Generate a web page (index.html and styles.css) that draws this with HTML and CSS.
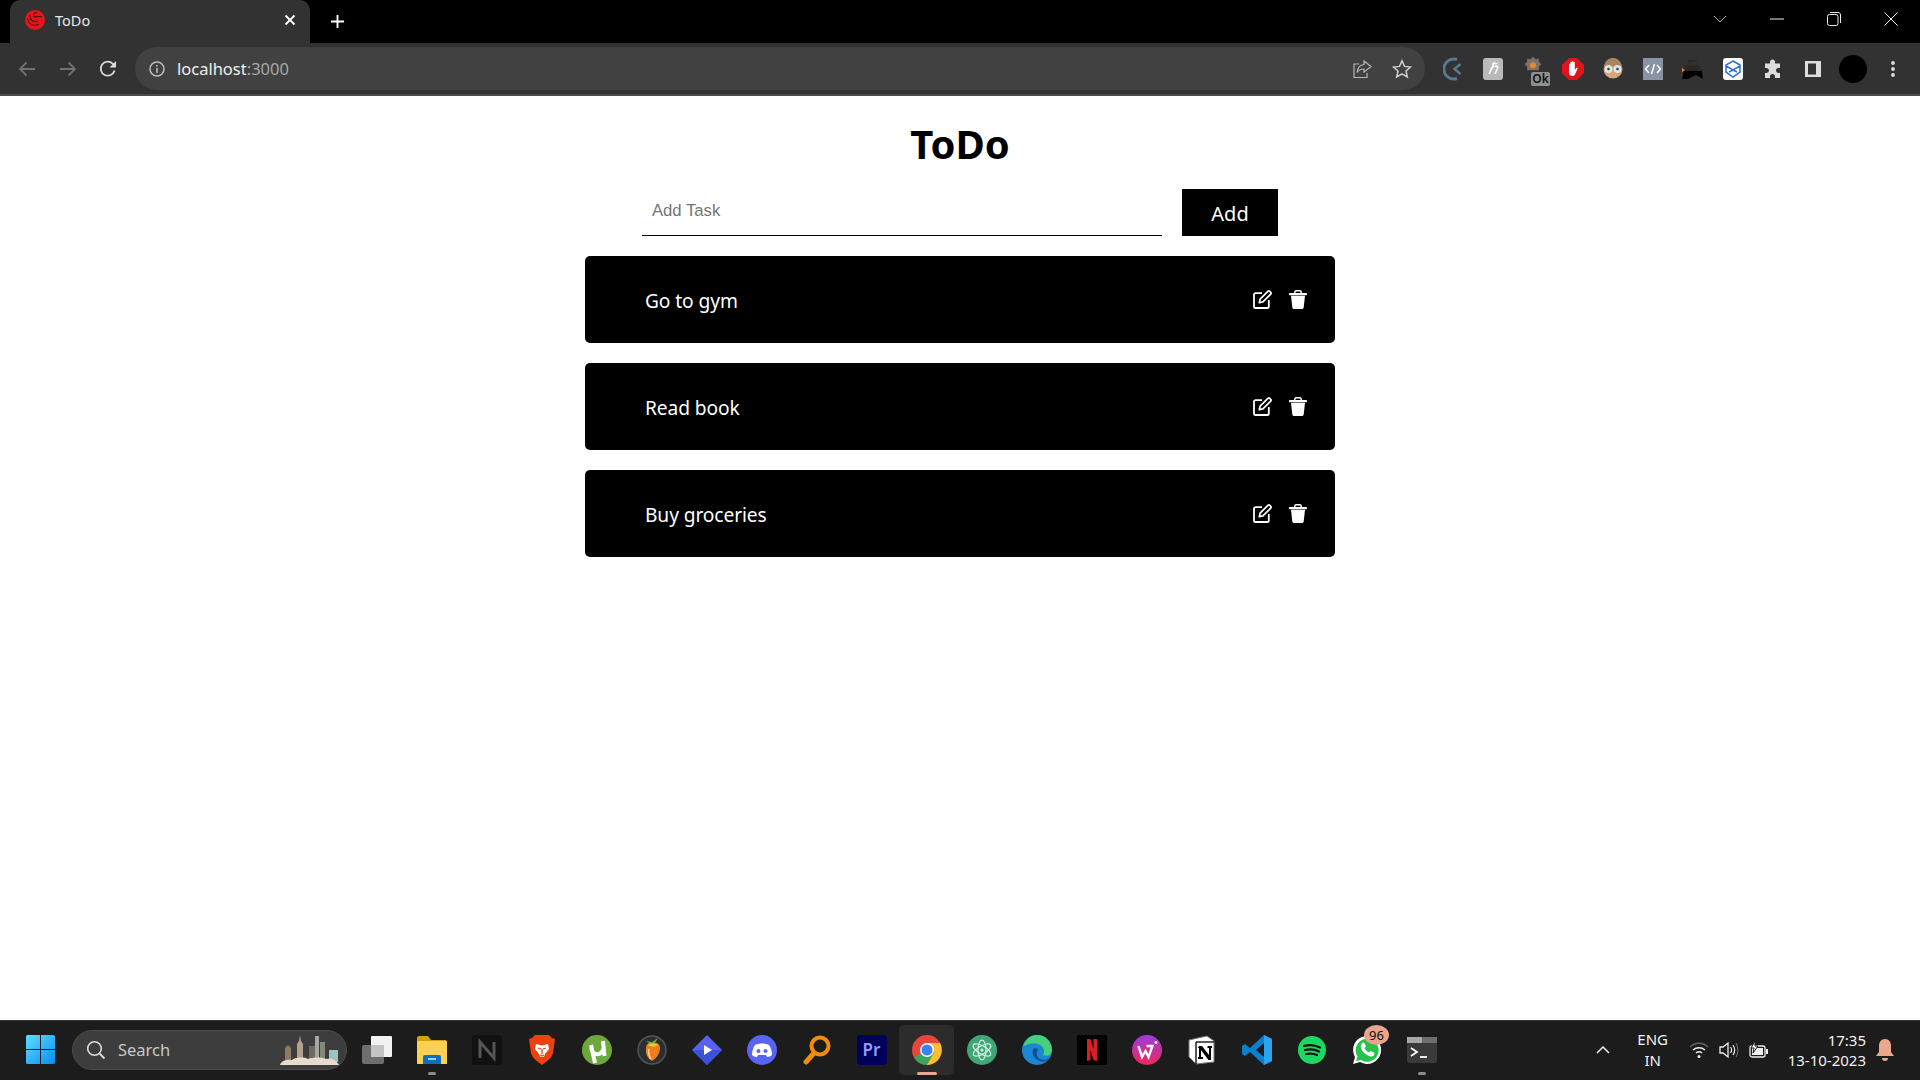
FILE: index.html
```html
<!DOCTYPE html>
<html lang="en">
  <head>
    <meta charset="UTF-8" />
    <title>ToDo</title>
    <link rel="stylesheet" href="styles.css">
  </head>
  <body>
    <svg class="sprites" width="0" height="0">
      <symbol id="edit" viewBox="0 0 19 19">
        <path fill="none" stroke="#fff" stroke-width="1.800" d="M9 3.200H2.600A1.600 1.600 0 0 0 1 4.800v11.600A1.600 1.600 0 0 0 2.600 18h11.600a1.600 1.600 0 0 0 1.600-1.600V10"/>
        <path fill="none" stroke="#fff" stroke-width="1.700" stroke-linejoin="round" d="M6.300 12.700l.8-3.600 7.800-7.700c.6-.6 1.300-.6 1.900 0l.9.9c.6.6.6 1.300 0 1.900l-7.800 7.700z"/>
      </symbol>
      <symbol id="trash" viewBox="0 0 18 19">
        <path fill="none" stroke="#fff" stroke-width="1.500" d="M5.800 4V2.300C5.800 1.300 6.500.8 7.300.8h3.400c.8 0 1.500.5 1.500 1.500V4"/>
        <path fill="#fff" d="M.6 3h16.800c.3 0 .6.300.6.600v1c0 .3-.3.600-.6.600H.6C.3 5.200 0 4.900 0 4.600v-1C0 3.300.3 3 .6 3z"/>
        <path fill="#fff" d="M2 5.800h14l-1.300 11.700c-.1.900-.8 1.500-1.700 1.500H5c-.9 0-1.600-.6-1.700-1.500z"/>
      </symbol>
    </svg>

    <header class="tabstrip">
      <div class="tab">
        <svg class="favicon" viewBox="0 0 20 20">
          <circle cx="10" cy="10" r="10" fill="#e8161b"/>
          <path fill="none" stroke="#5a1214" stroke-width="1.300" d="M2.500 8c1 7 6.500 9 11.500 6M5 5c0 6 4 7.500 8 6M12 2.500c-3 0-4 2-3 4 2 1 5-1 8 .5"/>
        </svg>
        <span class="tab-title">ToDo</span>
        <svg class="tab-close" viewBox="0 0 12 12"><path d="M1.500 1.500l9 9m0-9l-9 9" stroke="#fff" stroke-width="1.800"/></svg>
      </div>
      <svg class="new-tab" viewBox="0 0 16 16"><path d="M8 1v14M1 8h14" stroke="#fff" stroke-width="2"/></svg>
      <div class="window-btns">
        <div class="win-btn"><svg width="14" height="8" viewBox="0 0 14 8"><path d="M1 1l6 6 6-6" fill="none" stroke="#aaa"/></svg></div>
        <div class="win-btn"><svg width="14" height="2" viewBox="0 0 14 2"><path d="M0 1h14" stroke="#eee"/></svg></div>
        <div class="win-btn"><svg width="14" height="14" viewBox="0 0 14 14"><rect x=".5" y="2.500" width="10.500" height="11" rx="2" fill="none" stroke="#eee"/><path d="M3 .5h8c1.500 0 2.500 1 2.500 2.500v8" fill="none" stroke="#eee"/></svg></div>
        <div class="win-btn"><svg width="14" height="14" viewBox="0 0 14 14"><path d="M.5.5l13 13m0-13l-13 13" stroke="#eee"/></svg></div>
      </div>
    </header>

    <nav class="toolbar">
      <div class="nav-btn"><svg width="18" height="16" viewBox="0 0 18 16"><path d="M17 8H2m6.500-6.500L2 8l6.500 6.500" fill="none" stroke="#717171" stroke-width="1.800"/></svg></div>
      <div class="nav-btn"><svg width="18" height="16" viewBox="0 0 18 16"><path d="M1 8h15M9.500 1.500L16 8l-6.500 6.500" fill="none" stroke="#717171" stroke-width="1.800"/></svg></div>
      <div class="nav-btn"><svg width="18" height="18" viewBox="0 0 18 18"><path d="M15.500 10.500A7 7 0 1 1 13.800 3.800L16 6" fill="none" stroke="#dcdcdc" stroke-width="1.800"/><path d="M17 1v6.500h-6.500z" fill="#dcdcdc"/></svg></div>

      <div class="omnibox">
        <svg class="info" width="16" height="16" viewBox="0 0 16 16"><circle cx="8" cy="8" r="7" fill="none" stroke="#bdbdbd" stroke-width="1.500"/><path d="M8 7v5M8 4v1.600" stroke="#bdbdbd" stroke-width="1.600"/></svg>
        <span class="url">localhost<span class="url-port">:3000</span></span>
        <div class="omni-actions">
          <svg width="20" height="20" viewBox="0 0 20 20"><path d="M7 5H2v13.500h13V14" fill="none" stroke="#b5b5b5" stroke-width="1.200"/><path d="M12 2l7 5.500-7 5.500V10c-3.500 0-5.500 1-7 3.500C5.500 9 8 6 12 5.500z" fill="none" stroke="#b5b5b5" stroke-width="1.200"/></svg>
          <svg width="20" height="20" viewBox="0 0 20 20"><path d="M10 1.800l2.500 5.600 6 .6-4.500 4 1.300 6-5.300-3.100-5.300 3.100 1.300-6-4.500-4 6-.6z" fill="none" stroke="#d0d0d0" stroke-width="1.500"/></svg>
        </div>
      </div>

      <div class="extensions">
        <div class="ext">
          <svg width="20" height="24" viewBox="0 0 20 24"><path d="M14 2.500A10 10 0 1 0 14 21.500" fill="none" stroke="#567b8f" stroke-width="3"/><path d="M17.500 7l-6 5 6 5" fill="none" stroke="#567b8f" stroke-width="2.400"/></svg>
        </div>
        <div class="ext">
          <div class="ext-k">ℏ</div>
        </div>
        <div class="ext">
          <svg class="ext-gear" width="20" height="20" viewBox="0 0 24 24"><path d="M12 1l3 3 4-1 0 4 3 3-3 3v4H5v-4l-3-3 3-3 0-4 4 1z" fill="#7d7269"/><circle cx="12" cy="11" r="3.500" fill="#e8862b"/></svg>
          <span class="ok-tag">Ok</span>
        </div>
        <div class="ext">
          <svg width="22" height="22" viewBox="0 0 22 22"><path d="M7 0h8l7 7v8l-7 7H7l-7-7V7z" fill="#e0141b"/><path d="M7 11V6.500c0-1 1.400-1 1.400 0V10 4.500c0-1 1.500-1 1.500 0V10 3.800c0-1 1.500-1 1.500 0V10 4.800c0-1 1.400-1 1.400 0V12l1.500-2c.8-.8 1.700 0 1.200.8L13 16.500c-.6 1-1.500 1.500-2.600 1.500C8.500 18 7 16.500 7 14.500z" fill="#fff"/></svg>
        </div>
        <div class="ext">
          <svg width="20" height="22" viewBox="0 0 20 22"><circle cx="10" cy="11" r="9.500" fill="#d7a47f"/><path d="M1 10C2 2 6 0 10 0s8 2 9 10c-4 0-6-1-7-3-2 2-6 3-11 3z" fill="#a58661"/><circle cx="5.500" cy="11" r="3.500" fill="#cfe6e6" stroke="#eee"/><circle cx="14.500" cy="11" r="3.500" fill="#cfe6e6" stroke="#eee"/><circle cx="5.500" cy="11" r="1.300" fill="#345"/><circle cx="14.500" cy="11" r="1.300" fill="#345"/></svg>
        </div>
        <div class="ext">
          <svg width="20" height="22" viewBox="0 0 20 22"><rect width="20" height="22" fill="#8a93a6"/><path d="M6 7l-3.500 4L6 15m8-8l3.500 4-3.500 4M11.500 6l-3 10" fill="none" stroke="#fff" stroke-width="1.400"/></svg>
        </div>
        <div class="ext">
          <svg width="22" height="24" viewBox="0 0 22 24"><path d="M6 3h8l2 2-3-.5L6 6zM4 8h12l5 6H0z" fill="#2c2724"/><path d="M2 14h18l1 8-7-4-8 4H0z" fill="#000"/><path d="M0 11l3 2-3 2z" fill="#e8862b"/></svg>
        </div>
        <div class="ext">
          <svg width="20" height="22" viewBox="0 0 20 22"><rect width="20" height="22" rx="3" fill="#fff"/><path d="M10 3l7 4v7l-7 5-7-5V7zM3 8l7 4 7-4M6 14l4-2 4 2" fill="none" stroke="#2f6be0" stroke-width="1.500"/></svg>
        </div>
        <div class="ext">
          <svg width="20" height="20" viewBox="0 0 20 20"><path d="M7 3a2.500 2.500 0 0 1 5 0v1.500h5V9h-1.500a2.500 2.500 0 0 0 0 5H17v5H12v-1.500a2.500 2.500 0 0 0-5 0V19H2v-5h1.500a2.500 2.500 0 0 0 0-5H2V4.500h5z" fill="#dcdcdc"/></svg>
        </div>
        <div class="ext">
          <svg width="18" height="18" viewBox="0 0 18 18"><rect x="1" y="1" width="16" height="16" fill="#ddd"/><rect x="4" y="3.500" width="8" height="11" fill="#323232"/></svg>
        </div>
        <div class="ext"><div class="avatar"></div></div>
        <div class="ext">
          <svg width="6" height="18" viewBox="0 0 6 18"><circle cx="3" cy="3" r="1.900" fill="#ddd"/><circle cx="3" cy="9" r="1.900" fill="#ddd"/><circle cx="3" cy="15" r="1.900" fill="#ddd"/></svg>
        </div>
      </div>
    </nav>

    <main class="page">
      <h1 class="title">ToDo</h1>
      <form class="add-form">
        <input class="add-input" type="text" placeholder="Add Task" />
        <button class="add-btn" type="button">Add</button>
      </form>
      <ul class="tasks">
        <li class="task">
          <span class="task-name">Go to gym</span>
          <div class="task-actions">
            <svg class="icon-edit"><use href="#edit"/></svg>
            <svg class="icon-trash"><use href="#trash"/></svg>
          </div>
        </li>
        <li class="task">
          <span class="task-name">Read book</span>
          <div class="task-actions">
            <svg class="icon-edit"><use href="#edit"/></svg>
            <svg class="icon-trash"><use href="#trash"/></svg>
          </div>
        </li>
        <li class="task">
          <span class="task-name">Buy groceries</span>
          <div class="task-actions">
            <svg class="icon-edit"><use href="#edit"/></svg>
            <svg class="icon-trash"><use href="#trash"/></svg>
          </div>
        </li>
      </ul>
    </main>

    <footer class="taskbar">
      <svg class="start" viewBox="0 0 29 29">
        <defs><linearGradient id="winblue" x1="0" y1="0" x2="1" y2="1"><stop offset="0" stop-color="#5fdcff"/><stop offset="1" stop-color="#0a8df0"/></linearGradient></defs>
        <path fill="url(#winblue)" d="M0 1.500A1.500 1.500 0 0 1 1.500 0H14v14H0zM15 0h12.500A1.500 1.500 0 0 1 29 1.500V14H15zM0 15h14v14H1.500A1.500 1.500 0 0 1 0 27.500zM15 15h14v12.500a1.500 1.500 0 0 1-1.500 1.500H15z"/>
      </svg>
      <div class="search">
        <svg width="20" height="20" viewBox="0 0 20 20"><circle cx="8.500" cy="8.500" r="6.800" fill="none" stroke="#ddd" stroke-width="1.600"/><path d="M13.500 13.500l5 5" stroke="#ddd" stroke-width="1.800"/></svg>
        <span class="search-text">Search</span>
        <svg class="search-art" width="62" height="32" viewBox="0 0 62 32">
          <path d="M18 26V10l2-3 1-6 1 6 2 3v16z" fill="#b3a08f"/>
          <path d="M6 26V14l3-3 3 3v12z" fill="#8c7a66"/>
          <rect x="30" y="12" width="8" height="14" fill="#6c6a60"/>
          <rect x="36" y="2" width="4" height="24" fill="#a8a79f"/>
          <rect x="41" y="8" width="5" height="18" fill="#7f8a78"/>
          <rect x="50" y="16" width="9" height="12" fill="#9fc2c4"/>
          <path d="M1 31c1-5 8-6 12-5 4-3 12-3 16-1 5-2 14-2 18 0 4-1 10 0 13 6z" fill="#e6dbcd"/>
        </svg>
      </div>

      <div class="apps">
        <div class="app">
          <svg width="30" height="28" viewBox="0 0 30 28"><rect x="0" y="9" width="22" height="19" rx="2" fill="#6e6e6e"/><rect x="9" y="0" width="21" height="21" rx="1" fill="#f2f2f2"/><rect x="9" y="9" width="13" height="12" fill="#c3c3c3"/></svg>
        </div>
        <div class="app">
          <svg width="30" height="28" viewBox="0 0 30 28"><path d="M0 2a2 2 0 0 1 2-2h9l3 4h14a2 2 0 0 1 2 2v22H0z" fill="#d99c0d"/><rect y="5" width="30" height="23" rx="1" fill="#fcd053"/><path d="M6 28v-7a2 2 0 0 1 2-2h14a2 2 0 0 1 2 2v7z" fill="#0e6fc4"/><rect x="11" y="22" width="8" height="2" fill="#9fd2f5"/></svg>
          <span class="running"></span>
        </div>
        <div class="app">
          <svg width="30" height="30" viewBox="0 0 30 30"><rect width="30" height="30" rx="3" fill="#111"/><path d="M8 23V7l14 16V7" fill="none" stroke="#555" stroke-width="3"/></svg>
        </div>
        <div class="app">
          <svg width="26" height="30" viewBox="0 0 26 30"><path d="M6 0h14l3 3 3 1-2 14c-1 5-7 9-11 12C9 27 3 23 2 18L0 4l3-1z" fill="#f1400f"/><path d="M7 9l6 1.500L19 9l1 5-4 5-1 3h-4l-1-3-4-5z" fill="#fff"/><path d="M9 13l3 1m5-1l-3 1m-3 6l2 1 2-1M13 14v5" stroke="#f1400f" stroke-width="1.300" fill="none"/></svg>
        </div>
        <div class="app">
          <svg width="30" height="30" viewBox="0 0 30 30"><circle cx="15" cy="15" r="15" fill="#6da83c"/><path d="M13 28L9 10m.3 3c1 8 10 8 12 1M21 6l1.500 15" fill="none" stroke="#fff" stroke-width="4"/></svg>
        </div>
        <div class="app">
          <svg width="30" height="30" viewBox="0 0 30 30"><circle cx="15" cy="15" r="14" fill="#2b2f33" stroke="#555" stroke-width="1.500"/><path d="M15 8c5-1 8 1 8 5 0 6-4 11-8 13-4-2-7-7-6-13 0-4 3-6 6-5z" fill="#f07d1a"/><path d="M11 10c2-2 7-2 10 0-3 2-7 2-10 0z" fill="#fbc23d"/><path d="M12 8l-3-2 6 1 6-4-3 5z" fill="#6aaa3c"/><path d="M12 14c-1 3 0 7 2 10" fill="none" stroke="#fbd7a2" stroke-width="1.500"/></svg>
        </div>
        <div class="app">
          <svg width="30" height="30" viewBox="0 0 30 30"><path d="M15 0l15 15-15 15L0 15z" fill="#5a60f0"/><path d="M15 30L0 15h30z" fill="#3a52d8"/><path d="M12 10l8 5-8 5z" fill="#fff"/></svg>
        </div>
        <div class="app">
          <svg width="30" height="30" viewBox="0 0 30 30"><circle cx="15" cy="15" r="15" fill="#5865f2"/><path d="M8 10c4-2 10-2 14 0 2 3 3 6 3 10-1 1-3 2-5 2l-1-2H11l-1 2c-2 0-4-1-5-2 0-4 1-7 3-10z" fill="#fff"/><circle cx="11.500" cy="16" r="2" fill="#5865f2"/><circle cx="18.500" cy="16" r="2" fill="#5865f2"/></svg>
        </div>
        <div class="app">
          <svg width="28" height="30" viewBox="0 0 28 30"><circle cx="17" cy="11" r="8.500" fill="none" stroke="#f28a0c" stroke-width="4"/><path d="M11 18L3 27" stroke="#f28a0c" stroke-width="5" stroke-linecap="round"/></svg>
        </div>
        <div class="app">
          <div class="app-pr">Pr</div>
        </div>
        <div class="app app-active">
          <svg width="30" height="30" viewBox="0 0 30 30"><circle cx="15" cy="15" r="15" fill="#e8453c"/><path d="M15 15L2 22.500A15 15 0 0 0 15 30l7.500-13z" fill="#3ba55c"/><path d="M15 8h13a15 15 0 0 1-13 22l7.500-13z" fill="#fbc02d"/><circle cx="15" cy="15" r="7" fill="#fff"/><circle cx="15" cy="15" r="5.500" fill="#3b82f0"/></svg>
          <span class="running running-active"></span>
        </div>
        <div class="app">
          <svg width="30" height="30" viewBox="0 0 30 30"><circle cx="15" cy="15" r="15" fill="#3fa678"/><g fill="none" stroke="#d6f2e2" stroke-width="1.200"><ellipse cx="15" cy="15" rx="4" ry="10"/><ellipse cx="15" cy="15" rx="4" ry="10" transform="rotate(60 15 15)"/><ellipse cx="15" cy="15" rx="4" ry="10" transform="rotate(-60 15 15)"/></g><circle cx="15" cy="15" r="1.500" fill="#d6f2e2"/></svg>
        </div>
        <div class="app">
          <svg width="30" height="30" viewBox="0 0 30 30"><circle cx="15" cy="15" r="15" fill="#1b87d2"/><path d="M1 12C3 4 9 0 15 0c8 0 15 6 15 15 0 5-5 7-9 5 2-3 1-8-3-10-6-3-14-1-17 2z" fill="#46d07e"/><path d="M12 13c-3 4-1 11 6 13 4 1 8 0 10-3-3 2-7 3-10 1-4-2-4-7-2-10z" fill="#0e4f95"/></svg>
        </div>
        <div class="app">
          <svg width="30" height="30" viewBox="0 0 30 30"><rect width="30" height="30" fill="#000"/><path d="M10 4h3.500l3 10V4H20v22l-3.500-1-3-10v10l-3.500 1z" fill="#d81f26"/></svg>
        </div>
        <div class="app">
          <svg width="30" height="30" viewBox="0 0 30 30"><defs><linearGradient id="wps" x1="0" y1="0" x2="0" y2="1"><stop offset="0" stop-color="#9c3be0"/><stop offset="1" stop-color="#f0285a"/></linearGradient></defs><circle cx="15" cy="15" r="15" fill="url(#wps)"/><path d="M6.500 11l3.500 11 3.500-6 3 6 4-11h-6" fill="none" stroke="#fff" stroke-width="2.400"/><circle cx="24" cy="7.500" r="1.400" fill="#fff"/></svg>
        </div>
        <div class="app">
          <svg width="28" height="30" viewBox="0 0 28 30"><path d="M1 5l18-4 7 5v21l-18 2-7-7z" fill="#fff" stroke="#777"/><path d="M8 7h18M8 7v22" stroke="#222" stroke-width="1.500"/><path d="M11 11h3l7 9v-7h-1.500v-2H24v2h-1v12h-2.500L13 15v7h2v2h-5v-2h1V13h-1z" fill="#000"/></svg>
        </div>
        <div class="app">
          <svg width="30" height="30" viewBox="0 0 30 30"><path d="M22 0l8 4v22l-8 4L8 17l-5 4-3-2v-8l3-2 5 4zM22 8l-8 7 8 7z" fill="#0a7fcc"/><path d="M22 0l8 4v22l-8 4z" fill="#2aa4ee"/></svg>
        </div>
        <div class="app">
          <svg width="28" height="28" viewBox="0 0 28 28"><circle cx="14" cy="14" r="14" fill="#1ed760"/><path d="M6 10c5-1.500 11-1 16 1.500M7 14c4-1 10-.8 14 1.500M8 18c4-.8 8-.5 11 1" fill="none" stroke="#191414" stroke-width="2.200" stroke-linecap="round"/></svg>
        </div>
        <div class="app">
          <svg width="30" height="30" viewBox="0 0 30 30"><path d="M1 29l2-7A14 14 0 1 1 8 27z" fill="#fff"/><path d="M4 26l1.500-4.500A11.500 11.500 0 1 1 9 25z" fill="#27c24c"/><path d="M10 8l2-.5 2 4-1.500 1.500c1 2 2.500 3.500 4.500 4.500l1.500-1.500 4 2-.5 2c-1 1.500-3 2-5 1-4-1.500-7-4.500-8-8-.5-2 0-3.500 1-5z" fill="#fff"/></svg>
          <span class="badge">96</span>
        </div>
        <div class="app">
          <svg width="30" height="26" viewBox="0 0 30 26"><rect width="30" height="26" rx="2" fill="#3a3a3a"/><rect width="30" height="6" fill="#a8a8a8"/><rect x="15" width="15" height="6" fill="#6f6f6f"/><path d="M4 11l6 4-6 4" fill="none" stroke="#fff" stroke-width="1.800"/><path d="M13 20h7" stroke="#fff" stroke-width="1.800"/></svg>
          <span class="running"></span>
        </div>
      </div>

      <div class="tray">
        <svg class="tray-chevron" width="14" height="8" viewBox="0 0 14 8"><path d="M1 7l6-6 6 6" fill="none" stroke="#eee" stroke-width="1.500"/></svg>
        <div class="lang">ENG<br />IN</div>
        <div class="tray-icons">
          <svg width="20" height="18" viewBox="0 0 20 18"><path d="M1 6c5-5 13-5 18 0" fill="none" stroke="#666" stroke-width="1.300"/><path d="M4 9c3.500-3 8.500-3 12 0M7 12c1.800-1.500 4.200-1.500 6 0" fill="none" stroke="#eee" stroke-width="1.500"/><circle cx="10" cy="15.500" r="1.500" fill="#eee"/></svg>
          <svg width="20" height="18" viewBox="0 0 20 18"><path d="M1 6h3l5-4v14l-5-4H1z" fill="none" stroke="#eee" stroke-width="1.300"/><path d="M11.500 6c1.300 1.800 1.300 4.200 0 6M14 4c2 3 2 7 0 10" fill="none" stroke="#eee" stroke-width="1.200"/><path d="M17 2c2.500 4 2.500 10 0 14" fill="none" stroke="#666" stroke-width="1.200"/></svg>
          <svg width="20" height="18" viewBox="0 0 20 18"><rect x="1" y="5" width="15" height="11" rx="2" fill="none" stroke="#eee" stroke-width="1.300"/><rect x="3" y="7" width="11" height="7" fill="#eee"/><rect x="17" y="8" width="2" height="5" fill="#eee"/><path d="M6 0L2 7h3l-1 5 5-7H6z" fill="#eee" stroke="#1c1c1c"/></svg>
        </div>
        <div class="clock">17:35<br />13-10-2023</div>
        <svg class="bell" width="18" height="24" viewBox="0 0 18 24"><path d="M9 1c4 0 6 3 6 7v6l3 4H0l3-4V8c0-4 2-7 6-7z" fill="#eaa98c"/><path d="M6 20h6c0 2-1 3-3 3s-3-1-3-3z" fill="#eaa98c"/></svg>
      </div>
    </footer>
  </body>
</html>
```

FILE: styles.css
```css
* {
  margin: 0;
  padding: 0;
  box-sizing: border-box;
}

body {
  display: flex;
  flex-direction: column;
  height: 1080px;
  overflow: hidden;
  background: #fff;
  font-family: "Noto Sans", "Open Sans", sans-serif;
}

.sprites {
  position: absolute;
}

/* browser chrome */
.tabstrip {
  display: flex;
  align-items: center;
  height: 43px;
  background: #000;
  flex-shrink: 0;
}

.tab {
  display: flex;
  align-items: center;
  align-self: flex-end;
  height: 43px;
  width: 300px;
  margin-left: 10px;
  padding: 0 14px 3px 15px;
  background: #323232;
  border-radius: 10px 10px 0 0;
}

.favicon {
  width: 20px;
  height: 20px;
}

.tab-title {
  flex: 1;
  margin-left: 10px;
  font-size: 14.5px;
  color: #e8e8e8;
}

.tab-close {
  width: 12px;
  height: 12px;
}

.new-tab {
  width: 15px;
  height: 15px;
  margin-left: 20px;
}

.window-btns {
  display: flex;
  margin-left: auto;
  margin-right: 1px;
  padding-bottom: 5px;
}

.win-btn {
  display: flex;
  align-items: center;
  justify-content: center;
  width: 57px;
  height: 34px;
}

.toolbar {
  display: flex;
  align-items: center;
  height: 53px;
  padding: 0 7px 0 7px;
  background: #323232;
  border-bottom: 2px solid #4a4a4a;
  flex-shrink: 0;
}

.nav-btn {
  display: flex;
  align-items: center;
  justify-content: center;
  width: 40.5px;
  height: 40px;
}

.omnibox {
  display: flex;
  align-items: center;
  width: 1290px;
  height: 43px;
  margin-left: 6.500px;
  padding: 0 12px 0 14px;
  background: #414141;
  border-radius: 22px;
}

.url {
  margin-left: 12px;
  font-size: 16.5px;
  color: #f0f0f0;
}

.url-port {
  color: #a8a8a8;
}

.omni-actions {
  display: flex;
  gap: 20px;
  align-items: center;
  margin-left: auto;
  padding-right: 1px;
}

.extensions {
  display: flex;
  margin-left: 8px;
}

.ext {
  position: relative;
  display: flex;
  align-items: center;
  justify-content: center;
  width: 40px;
  height: 40px;
}

.ext-gear {
  margin-bottom: 6px;
}

.ext-k {
  width: 20px;
  height: 22px;
  border-radius: 3px;
  background: #b9b9b9;
  color: #fff;
  font-size: 16px;
  line-height: 22px;
  text-align: center;
  font-family: "Liberation Serif", serif;
  font-style: italic;
}

.ok-tag {
  position: absolute;
  right: 3px;
  bottom: 3px;
  width: 19px;
  height: 14px;
  background: #8f8f8f;
  border-radius: 2px;
  color: #111;
  font-size: 12px;
  font-weight: 600;
  line-height: 14px;
  text-align: center;
}

.avatar {
  width: 28px;
  height: 28px;
  border-radius: 50%;
  background: #000;
}

/* the todo page */
.page {
  flex: 1;
  display: flex;
  flex-direction: column;
  align-items: center;
  padding-top: 21px;
}

.title {
  font-size: 40px;
  font-weight: 700;
  line-height: 54px;
  color: #000;
}

.add-form {
  display: flex;
  gap: 20px;
  align-items: flex-end;
  margin-top: 18px;
}

.add-input {
  width: 520px;
  height: 47px;
  padding: 0 10px 2px;
  border: none;
  border-bottom: 1px solid #000;
  outline: none;
  font-family: "Liberation Sans", sans-serif;
  font-size: 16.67px;
}

.add-input::placeholder {
  color: #757575;
}

.add-btn {
  width: 96px;
  height: 47px;
  padding-top: 2px;
  border: none;
  background: #000;
  color: #fff;
  font-family: "Noto Sans", sans-serif;
  font-size: 20px;
}

.tasks {
  display: flex;
  flex-direction: column;
  gap: 20px;
  width: 750px;
  margin-top: 20px;
  list-style: none;
}

.task {
  display: flex;
  align-items: center;
  justify-content: space-between;
  height: 87px;
  padding: 0 28px 0 60px;
  background: #000;
  border-radius: 5px;
}

.task-name {
  font-size: 19.2px;
  letter-spacing: -0.1px;
  color: #fff;
  padding-top: 2px;
}

.task-actions {
  display: flex;
  align-items: center;
  gap: 17px;
}

.icon-edit {
  width: 19px;
  height: 19px;
}

.icon-trash {
  width: 18px;
  height: 19px;
}

/* windows taskbar */
.taskbar {
  display: flex;
  align-items: center;
  height: 60px;
  padding: 0 0 2px 26px;
  background: #1c1c1c;
  border-top: 1px solid #363636;
  flex-shrink: 0;
}

.start {
  width: 29px;
  height: 29px;
}

.search {
  display: flex;
  align-items: center;
  width: 275px;
  height: 40px;
  margin-left: 17px;
  padding: 0 5px 0 13px;
  background: #3d3d3d;
  border: 1px solid #4a4a4a;
  border-radius: 20px;
}

.search-text {
  margin-left: 12px;
  font-size: 16.5px;
  color: #c8c8c8;
}

.search-art {
  margin-left: auto;
}

.apps {
  display: flex;
  margin-left: 2px;
}

.app {
  position: relative;
  display: flex;
  align-items: center;
  justify-content: center;
  width: 55px;
  height: 50px;
}

.app-active {
  background: #2c2c2c;
  border-radius: 5px;
}

.app-pr {
  width: 30px;
  height: 30px;
  border-radius: 4px;
  background: #00005b;
  color: #9999ff;
  font-size: 17px;
  font-weight: 600;
  line-height: 30px;
  text-align: center;
}

.running {
  position: absolute;
  left: 50%;
  bottom: 0;
  width: 8px;
  height: 3px;
  margin-left: -4px;
  background: #8c8c8c;
  border-radius: 2px;
}

.running-active {
  width: 20px;
  margin-left: -10px;
  background: #e8a48c;
}

.badge {
  position: absolute;
  top: 0;
  right: 5px;
  width: 25px;
  height: 20px;
  border-radius: 50%;
  background: #e8a48c;
  color: #111;
  font-size: 13px;
  line-height: 20px;
  text-align: center;
}

.tray {
  display: flex;
  align-items: center;
  margin-left: auto;
  padding-right: 26px;
  color: #f2f2f2;
}

.tray-chevron {
  margin-right: 19px;
}

.lang {
  width: 48px;
  font-size: 15px;
  line-height: 21px;
  text-align: center;
}

.tray-icons {
  display: flex;
  gap: 10px;
  margin-left: 12px;
}

.clock {
  margin-left: 19px;
  font-size: 15px;
  line-height: 20px;
  text-align: right;
}

.bell {
  margin-left: 10px;
}
```
